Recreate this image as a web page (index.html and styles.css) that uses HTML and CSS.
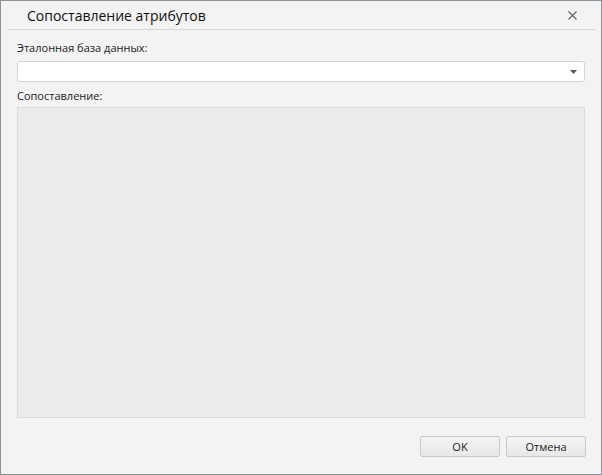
FILE: index.html
```html
<!DOCTYPE html>
<html>
<head>
<meta charset="utf-8">
<link rel="stylesheet" href="styles.css">
</head>
<body>
<div class="dialog">
  <div class="header">
    <div class="title">Сопоставление атрибутов</div>
    <div class="close">
      <svg width="9" height="9" viewBox="0 0 9 9"><path d="M0.5 0.5 L8.5 8.5 M8.5 0.5 L0.5 8.5" stroke="#666" stroke-width="1.2"/></svg>
    </div>
  </div>
  <div class="body">
    <div class="label">Эталонная база данных:</div>
    <div class="combo">
      <svg width="7" height="4" viewBox="0 0 7 4"><path d="M0 0 H7 L3.5 4 Z" fill="#555"/></svg>
    </div>
    <div class="label label2">Сопоставление:</div>
    <div class="area"></div>
  </div>
  <div class="footer">
    <div class="btn">OK</div>
    <div class="btn">Отмена</div>
  </div>
</div>
</body>
</html>
```
FILE: styles.css
```css
html, body { margin: 0; padding: 0; }
body { width: 602px; height: 475px; font-family: "Open Sans", "Noto Sans", sans-serif; color: #222; }
.dialog {
  box-sizing: border-box;
  width: 602px; height: 475px;
  background: #f3f3f3;
  border: 1px solid #8d9299;
  display: flex; flex-direction: column;
}
.header {
  margin: 0 6px;
  height: 28px;
  border-bottom: 1px solid #d6d6d6;
  display: flex; align-items: center; justify-content: space-between;
}
.title { font-size: 14px; padding-left: 20px; color: #111; padding-top: 1px; }
.close { width: 10px; height: 10px; margin-right: 18px; display: flex; align-items: center; justify-content: center; }
.body { padding: 10px 16px 0 16px; display: flex; flex-direction: column; flex: 1; }
.label { font-size: 11px; line-height: 16px; color: #222; }
.combo {
  margin-top: 5px;
  height: 19px;
  background: #fff;
  border: 1px solid #d3d3d3;
  border-radius: 3px;
  display: flex; align-items: center; justify-content: flex-end;
  padding-right: 7px;
}
.label2 { margin-top: 6px; }
.area {
  margin-top: 3px;
  height: 309px;
  background: #ebecee;
  border: 1px solid #dcdcdc;
}
.footer { display: flex; justify-content: flex-end; gap: 6px; padding: 0 15px 17px 0; }
.btn {
  box-sizing: border-box;
  width: 80px; height: 21px;
  border: 1px solid #c9c9c9;
  border-radius: 2px;
  background: linear-gradient(#f4f4f4, #e8e8e8);
  font-size: 11px;
  display: flex; align-items: center; justify-content: center;
  color: #222;
}
```
